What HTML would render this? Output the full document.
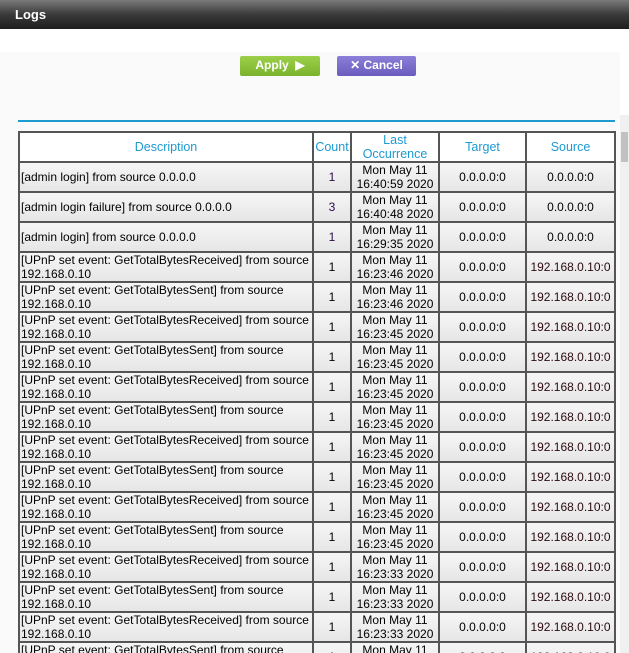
<!DOCTYPE html>
<html style="overflow:hidden;height:653px"><head><style>
body{margin:0;width:629px;height:653px;overflow:hidden;background:#fff;font-family:"Liberation Sans",Arial,sans-serif;position:relative}
.hdr{position:absolute;left:0;top:0;width:629px;height:29px;background:linear-gradient(#7a7a7a,#3a3a3a 50%,#1e1e1e);color:#fff;font-weight:bold;font-size:13px;line-height:29px;padding-left:15px;box-sizing:border-box}
.area{position:absolute;left:0;top:52px;width:620px;height:601px;background:#fafafa}
.btn{position:absolute;top:56px;height:20px;color:#fff;font-weight:bold;font-size:12px;line-height:19px;text-align:center;border-radius:2px}
.apply{left:240px;width:80px;background:linear-gradient(#9cd04a,#7bb22e)}
.cancel{left:337px;width:79px;background:linear-gradient(#8b7fd8,#6a5cbd)}
.line{position:absolute;left:18px;top:120px;width:597px;height:2px;background:#1f9bd0}
.sb{position:absolute;left:620px;top:115px;width:9px;height:538px;background:#f0f0f0}
.sb i{position:absolute;left:1px;top:17px;width:7px;height:30px;background:#c1c1c1}
.wrap{position:absolute;left:0;top:0;width:629px;height:653px;overflow:hidden}
table{position:absolute;left:18px;top:131px;border-collapse:collapse;table-layout:fixed;font-size:12px}
td,th{border:2px solid #555;height:26px;padding:0 1px;line-height:14px;background:linear-gradient(#f6f6f6,#e6e6e6);color:#000;overflow:hidden}
th{color:#1d9ad2;font-weight:normal;background:#fff;text-align:center;font-size:12.5px}
td.c{text-align:center}
td.n{color:#2a0a4a}
td.s{color:#2a0a10}
</style></head><body>
<div class="wrap">
<div class="hdr">Logs</div>
<div class="area"></div>
<div class="btn apply">Apply &nbsp;&#9654;</div>
<div class="btn cancel">&#10005; Cancel</div>
<div class="line"></div>
<div class="sb"><i></i></div>
<table>
<colgroup><col style="width:294px"><col style="width:38px"><col style="width:88px"><col style="width:87px"><col style="width:89px"></colgroup>
<tr><th>Description</th><th>Count</th><th>Last<br>Occurrence</th><th>Target</th><th>Source</th></tr>
<tr><td>[admin login] from source 0.0.0.0</td><td class="c n">1</td><td class="c">Mon May 11<br>16:40:59 2020</td><td class="c">0.0.0.0:0</td><td class="c">0.0.0.0:0</td></tr>
<tr><td>[admin login failure] from source 0.0.0.0</td><td class="c n">3</td><td class="c">Mon May 11<br>16:40:48 2020</td><td class="c">0.0.0.0:0</td><td class="c">0.0.0.0:0</td></tr>
<tr><td>[admin login] from source 0.0.0.0</td><td class="c n">1</td><td class="c">Mon May 11<br>16:29:35 2020</td><td class="c">0.0.0.0:0</td><td class="c">0.0.0.0:0</td></tr>
<tr><td>[UPnP set event: GetTotalBytesReceived] from source 192.168.0.10</td><td class="c">1</td><td class="c">Mon May 11<br>16:23:46 2020</td><td class="c">0.0.0.0:0</td><td class="c s">192.168.0.10:0</td></tr>
<tr><td>[UPnP set event: GetTotalBytesSent] from source 192.168.0.10</td><td class="c">1</td><td class="c">Mon May 11<br>16:23:46 2020</td><td class="c">0.0.0.0:0</td><td class="c s">192.168.0.10:0</td></tr>
<tr><td>[UPnP set event: GetTotalBytesReceived] from source 192.168.0.10</td><td class="c">1</td><td class="c">Mon May 11<br>16:23:45 2020</td><td class="c">0.0.0.0:0</td><td class="c s">192.168.0.10:0</td></tr>
<tr><td>[UPnP set event: GetTotalBytesSent] from source 192.168.0.10</td><td class="c">1</td><td class="c">Mon May 11<br>16:23:45 2020</td><td class="c">0.0.0.0:0</td><td class="c s">192.168.0.10:0</td></tr>
<tr><td>[UPnP set event: GetTotalBytesReceived] from source 192.168.0.10</td><td class="c">1</td><td class="c">Mon May 11<br>16:23:45 2020</td><td class="c">0.0.0.0:0</td><td class="c s">192.168.0.10:0</td></tr>
<tr><td>[UPnP set event: GetTotalBytesSent] from source 192.168.0.10</td><td class="c">1</td><td class="c">Mon May 11<br>16:23:45 2020</td><td class="c">0.0.0.0:0</td><td class="c s">192.168.0.10:0</td></tr>
<tr><td>[UPnP set event: GetTotalBytesReceived] from source 192.168.0.10</td><td class="c">1</td><td class="c">Mon May 11<br>16:23:45 2020</td><td class="c">0.0.0.0:0</td><td class="c s">192.168.0.10:0</td></tr>
<tr><td>[UPnP set event: GetTotalBytesSent] from source 192.168.0.10</td><td class="c">1</td><td class="c">Mon May 11<br>16:23:45 2020</td><td class="c">0.0.0.0:0</td><td class="c s">192.168.0.10:0</td></tr>
<tr><td>[UPnP set event: GetTotalBytesReceived] from source 192.168.0.10</td><td class="c">1</td><td class="c">Mon May 11<br>16:23:45 2020</td><td class="c">0.0.0.0:0</td><td class="c s">192.168.0.10:0</td></tr>
<tr><td>[UPnP set event: GetTotalBytesSent] from source 192.168.0.10</td><td class="c">1</td><td class="c">Mon May 11<br>16:23:45 2020</td><td class="c">0.0.0.0:0</td><td class="c s">192.168.0.10:0</td></tr>
<tr><td>[UPnP set event: GetTotalBytesReceived] from source 192.168.0.10</td><td class="c">1</td><td class="c">Mon May 11<br>16:23:33 2020</td><td class="c">0.0.0.0:0</td><td class="c s">192.168.0.10:0</td></tr>
<tr><td>[UPnP set event: GetTotalBytesSent] from source 192.168.0.10</td><td class="c">1</td><td class="c">Mon May 11<br>16:23:33 2020</td><td class="c">0.0.0.0:0</td><td class="c s">192.168.0.10:0</td></tr>
<tr><td>[UPnP set event: GetTotalBytesReceived] from source 192.168.0.10</td><td class="c">1</td><td class="c">Mon May 11<br>16:23:33 2020</td><td class="c">0.0.0.0:0</td><td class="c s">192.168.0.10:0</td></tr>
<tr><td>[UPnP set event: GetTotalBytesSent] from source 192.168.0.10</td><td class="c">1</td><td class="c">Mon May 11<br>16:23:33 2020</td><td class="c">0.0.0.0:0</td><td class="c s">192.168.0.10:0</td></tr>
</table>
</div>
</body></html>
